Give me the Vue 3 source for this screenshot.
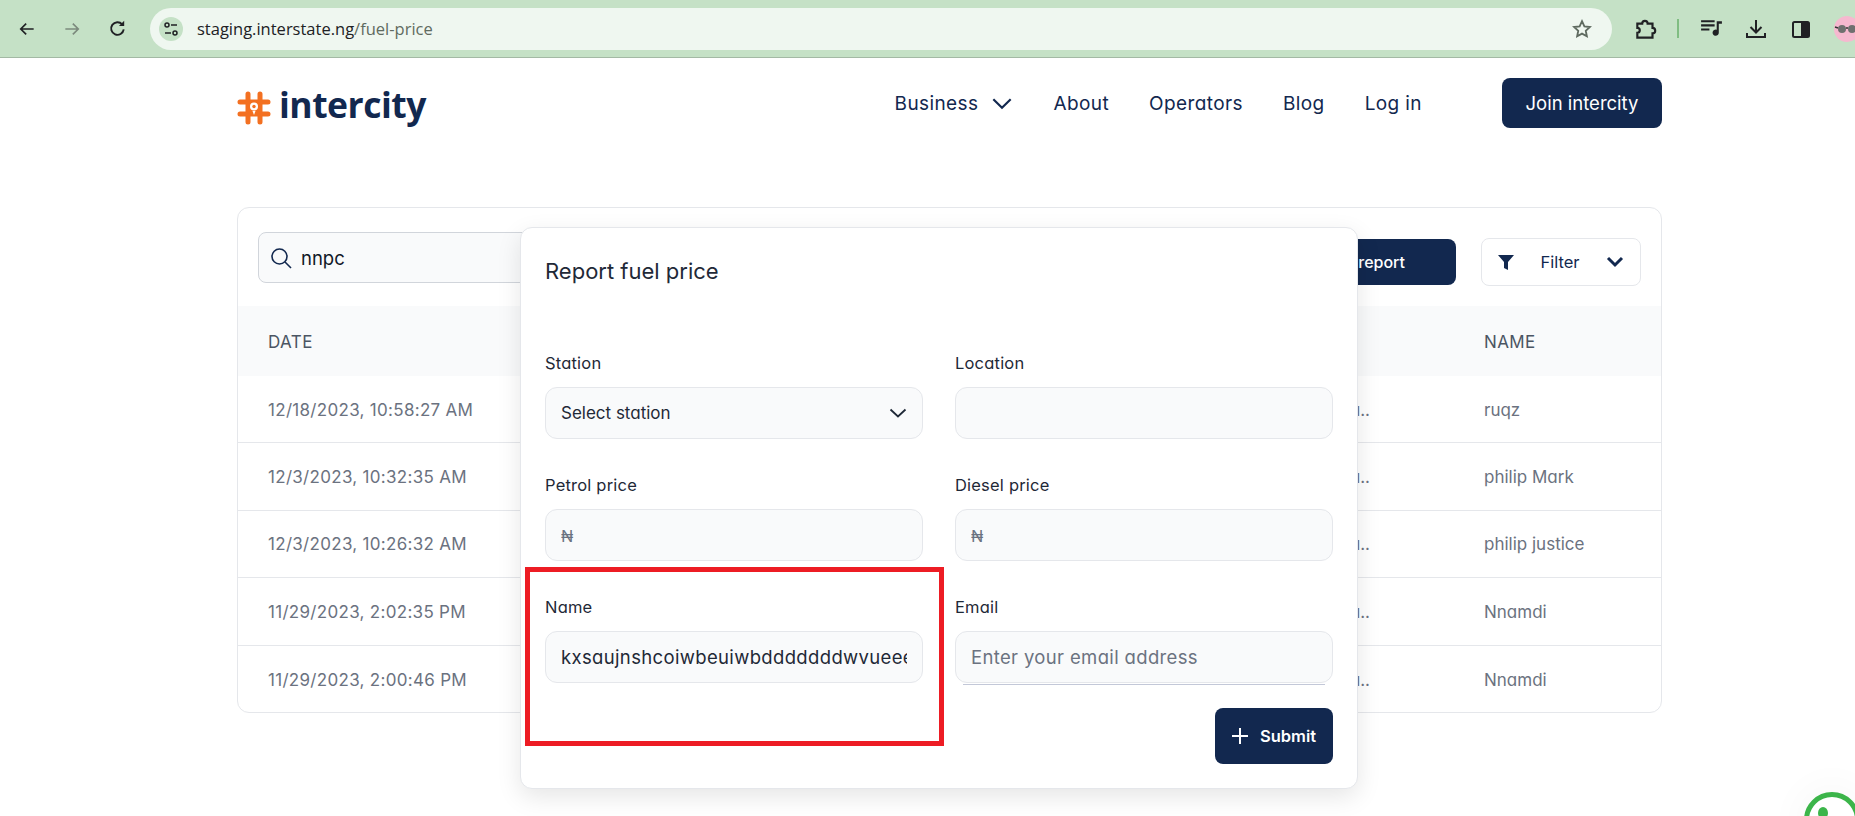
<template>
  <div class="page">
    <!-- browser bar -->
    <div class="chrome">
      <div class="nav-icons">
        <svg class="ic" viewBox="0 0 24 24"><path d="M20 12H5M11 5.500 4.500 12l6.500 6.500" fill="none" stroke="#202124" stroke-width="2"/></svg>
        <svg class="ic" viewBox="0 0 24 24"><path d="M4 12h15M13 5.500l6.500 6.500-6.500 6.500" fill="none" stroke="#7c8a7d" stroke-width="2"/></svg>
        <svg class="ic reload" viewBox="0 0 24 24"><path d="M18.500 13a6.600 6.600 0 1 1-1.600-5.400" fill="none" stroke="#202124" stroke-width="2"/><path d="M19 4v5.500h-5.500z" fill="#202124"/></svg>
      </div>
      <div class="omnibox">
        <span class="tune">
          <svg viewBox="0 0 16 16" width="16" height="16"><circle cx="4" cy="4" r="2" fill="none" stroke="#202124" stroke-width="1.500"/><path d="M8 4h6M2 12h6" stroke="#202124" stroke-width="1.500"/><circle cx="12" cy="12" r="2" fill="none" stroke="#202124" stroke-width="1.500"/></svg>
        </span>
        <span class="url">staging.interstate.ng<span class="url-path">/fuel-price</span></span>
        <svg class="star" viewBox="0 0 24 24"><path d="m12 3.500 2.600 5.600 6 .7-4.500 4.100 1.200 6L12 17l-5.300 2.900 1.200-6-4.500-4.100 6-.7z" fill="none" stroke="#5f6b60" stroke-width="2"/></svg>
      </div>
      <div class="tools">
        <svg class="ic puzzle" viewBox="0 0 24 24"><path d="M4 7h4.500a2.500 2.500 0 0 1 5 0H18v4a2.400 2.400 0 0 1 0 5v4H4v-4.500a2.200 2.200 0 0 0 0-4.500z" fill="none" stroke="#202124" stroke-width="2"/></svg>
        <span class="sep"></span>
        <svg class="ic media" viewBox="0 0 24 24"><path d="M2 5h13M2 9h13M2 13h8" stroke="#202124" stroke-width="2"/><path d="M17 5h5v2.500h-3V16a3 3 0 1 1-2-2.800z" fill="#202124"/></svg>
        <svg class="ic dl" viewBox="0 0 24 24"><path d="M12 3v12M6.500 10l5.500 5.500 5.500-5.500" fill="none" stroke="#202124" stroke-width="2"/><path d="M3 16v4h18v-4" fill="none" stroke="#202124" stroke-width="2"/></svg>
        <svg class="ic side" viewBox="0 0 24 24"><rect x="4" y="5" width="16" height="15" rx="1.500" fill="none" stroke="#202124" stroke-width="2"/><rect x="12" y="5" width="8" height="15" fill="#202124"/></svg>
        <svg class="avatar" viewBox="0 0 26 26"><circle cx="13" cy="13" r="13" fill="#f6b8cf"/><circle cx="8" cy="13" r="4" fill="#6f6f6f"/><circle cx="18" cy="13" r="4" fill="#6f6f6f"/><path d="M1 11l3 1M12 12h2" stroke="#333" stroke-width="1.500"/></svg>
      </div>
    </div>

    <header class="site-header">
      <div class="logo">
        <svg class="logo-mark" viewBox="0 0 34 34">
          <path d="M11 3v28M23 3v28M3 11h28M3 23h28" stroke="#f37021" stroke-width="5" stroke-linecap="round" fill="none"/>
          <rect x="11" y="11" width="12" height="12" fill="#f37021"/>
          <circle cx="17" cy="15.500" r="4" fill="#fff"/>
          <circle cx="17" cy="15.500" r="1.700" fill="#f37021"/>
          <path d="M15.500 20h3l-1.500 4z" fill="#fff"/>
        </svg>
        <span class="logo-text">intercity</span>
      </div>
      <nav class="site-nav">
        <a class="nav-link business">
          Business
          <svg viewBox="0 0 20 12" width="22" height="13"><path d="M2 2l8 8 8-8" fill="none" stroke="#12284f" stroke-width="2"/></svg>
        </a>
        <a class="nav-link">About</a>
        <a class="nav-link">Operators</a>
        <a class="nav-link">Blog</a>
        <a class="nav-link">Log in</a>
      </nav>
      <button class="join">Join intercity</button>
    </header>

    <main class="card">
      <div class="toolbar">
        <div class="search">
          <svg viewBox="0 0 22 22" width="22" height="22"><circle cx="9.500" cy="9.500" r="7.500" fill="none" stroke="#12284f" stroke-width="1.600"/><path d="M15 15l6 6" stroke="#12284f" stroke-width="1.600"/></svg>
          <span>nnpc</span>
        </div>
        <button class="report">Fuel report</button>
        <div class="filter">
          <svg viewBox="0 0 16 16" width="16" height="16"><path d="M0 1h16l-6 7v8l-4-2V8z" fill="#12284f"/></svg>
          <span>Filter</span>
          <svg viewBox="0 0 18 12" width="18" height="12"><path d="M2 2l7 7 7-7" fill="none" stroke="#12284f" stroke-width="3"/></svg>
        </div>
      </div>

      <div class="row head">
        <div>DATE</div>
        <div></div>
        <div>NAME</div>
      </div>
      <div v-for="r in rows" :key="r.date" class="row">
        <div class="date">{{ r.date }}</div>
        <div class="loc">Abu..</div>
        <div>{{ r.name }}</div>
      </div>
    </main>

    <!-- modal sits over the table -->
    <section class="modal">
      <h2 class="modal-title">Report fuel price</h2>
      <div class="form-grid">
        <div class="field">
          <label>Station</label>
          <div class="input select">
            <span>Select station</span>
            <svg viewBox="0 0 18 10" width="18" height="10"><path d="M1.500 1.500 9 8.500l7.500-7" fill="none" stroke="#1f2937" stroke-width="1.800"/></svg>
          </div>
        </div>
        <div class="field">
          <label>Location</label>
          <input class="input" type="text" />
        </div>
        <div class="field">
          <label>Petrol price</label>
          <input class="input price" type="text" placeholder="₦" />
        </div>
        <div class="field">
          <label>Diesel price</label>
          <input class="input price" type="text" placeholder="₦" />
        </div>
        <div class="field">
          <label>Name</label>
          <div class="input boxed">
            <input class="bare" type="text" value="kxsaujnshcoiwbeuiwbdddddddwvueeeeee" />
          </div>
        </div>
        <div class="field email">
          <label>Email</label>
          <input class="input" type="text" placeholder="Enter your email address" />
        </div>
      </div>
      <div class="actions">
        <button class="submit">
          <svg viewBox="0 0 16 16" width="16" height="16"><path d="M8 0v16M0 8h16" stroke="#fff" stroke-width="2"/></svg>
          Submit
        </button>
      </div>
    </section>

    <!-- annotation drawn on the screenshot -->
    <div class="red-box"></div>

    <div class="chat-widget">
      <svg viewBox="0 0 56 56" width="56" height="56"><circle cx="28" cy="28" r="25.500" fill="none" stroke="#3cb54a" stroke-width="5"/><ellipse cx="19" cy="21" rx="5" ry="6" fill="#3cb54a"/></svg>
    </div>
  </div>
</template>

<script setup>
const rows = [
  { date: '12/18/2023, 10:58:27 AM', name: 'ruqz' },
  { date: '12/3/2023, 10:32:35 AM', name: 'philip Mark' },
  { date: '12/3/2023, 10:26:32 AM', name: 'philip justice' },
  { date: '11/29/2023, 2:02:35 PM', name: 'Nnamdi' },
  { date: '11/29/2023, 2:00:46 PM', name: 'Nnamdi' }
]
</script>

<style>
html, body {
  height: 816px;
  overflow: hidden;
  background: #fff;
}
</style>

<style scoped>
.page {
  position: relative;
  height: 816px;
  overflow: hidden;
  font-family: Inter, "Noto Sans", sans-serif;
  font-feature-settings: "cv11";
  color: #12284f;
}

/* browser bar */
.chrome {
  display: flex;
  align-items: center;
  height: 57px;
  background: #c5e1c6;
  border-bottom: 1px solid #a3b9a4;
  padding: 0 0 0 17px;
  box-sizing: content-box;
}
.nav-icons {
  display: flex;
  align-items: center;
  gap: 25px;
  width: 133px;
  flex: none;
}
.ic {
  width: 20px;
  height: 20px;
  flex: none;
}
.reload {
  width: 23px;
  height: 23px;
  margin-left: -1px;
}
.omnibox {
  display: flex;
  align-items: center;
  flex: none;
  width: 1462px;
  height: 42px;
  background: #eff7f0;
  border-radius: 21px;
  padding: 0 19px 0 9px;
  box-sizing: border-box;
}
.tune {
  display: flex;
  align-items: center;
  justify-content: center;
  width: 24px;
  height: 24px;
  border-radius: 50%;
  background: #c5e1c6;
}
.url {
  margin-left: 14px;
  flex: 1;
  font-family: "Open Sans", sans-serif;
  font-size: 16.500px;
  color: #202124;
}
.url-path {
  color: #5f6b60;
}
.star {
  width: 22px;
  height: 22px;
}
.tools {
  display: flex;
  align-items: center;
  margin-left: 21px;
}
.puzzle {
  width: 26px;
  height: 26px;
}
.sep {
  width: 2px;
  height: 19px;
  background: #80bd82;
  margin: 0 20px 0 18px;
}
.media {
  width: 25px;
  height: 25px;
  margin-right: 20px;
}
.dl {
  width: 24px;
  height: 24px;
  margin-right: 21px;
}
.side {
  width: 24px;
  height: 24px;
  margin-right: 21px;
}
.avatar {
  width: 26px;
  height: 26px;
  flex: none;
}

/* site header */
.site-header {
  display: flex;
  align-items: center;
  width: 1425px;
  margin-left: 237px;
  padding: 20px 0 0;
  height: 50px;
  box-sizing: content-box;
}
.logo {
  display: flex;
  align-items: center;
  gap: 8px;
}
.logo-mark {
  width: 34px;
  height: 34px;
  margin-top: 9px;
}
.logo-text {
  font-family: "Open Sans", sans-serif;
  font-size: 35.500px;
  font-weight: 700;
  letter-spacing: -0.500px;
  line-height: 44px;
  margin-top: 2px;
}
.site-nav {
  display: flex;
  align-items: center;
  gap: 40px;
  margin-left: auto;
  font-size: 19px;
  letter-spacing: 0.400px;
}
.business {
  display: flex;
  align-items: center;
  gap: 13px;
}
.join {
  margin-left: 80px;
  width: 160px;
  height: 50px;
  border: none;
  border-radius: 8px;
  background: #12284f;
  color: #fff;
  font: inherit;
  font-size: 18.500px;
}

/* table card */
.card {
  width: 1425px;
  height: 506px;
  margin: 79px 0 0 237px;
  border: 1px solid #e5e7eb;
  border-radius: 12px;
  box-sizing: border-box;
  overflow: hidden;
}
.toolbar {
  display: flex;
  align-items: flex-start;
  height: 98px;
  padding: 24px 20px 0;
  box-sizing: border-box;
}
.search {
  display: flex;
  align-items: center;
  gap: 9px;
  width: 500px;
  height: 51px;
  padding-left: 11px;
  box-sizing: border-box;
  background: #f9fafb;
  border: 1px solid #d1d5db;
  border-radius: 8px;
  font-size: 18.500px;
  color: #111827;
}
.report {
  margin: 7px 0 0 auto;
  width: 190px;
  height: 46px;
  padding: 0 51px 0 0;
  border: none;
  border-radius: 8px;
  background: #12284f;
  color: #fff;
  font: inherit;
  font-size: 16px;
  font-weight: 500;
  text-align: right;
}
.filter {
  display: flex;
  align-items: center;
  justify-content: space-between;
  margin: 6px 0 0 25px;
  width: 160px;
  height: 48px;
  padding: 0 16px;
  box-sizing: border-box;
  border: 1px solid #e5e7eb;
  border-radius: 8px;
  font-size: 16.500px;
}
.row {
  display: grid;
  grid-template-columns: 300px 1fr 177px;
  align-items: center;
  height: 67.400px;
  padding: 1px 0 0 30px;
  border-bottom: 1px solid #e5e7eb;
  box-sizing: border-box;
  font-size: 17px;
  color: #6b7280;
}
.row:last-child {
  border-bottom: none;
}
.row.head {
  height: 70px;
  background: #f9fafb;
  border-bottom: none;
  letter-spacing: 0.400px;
  color: #4b5563;
}
.date {
  letter-spacing: 0.300px;
}
.loc {
  text-align: right;
  padding-right: 114px;
}

/* modal */
.modal {
  position: absolute;
  left: 520px;
  top: 227px;
  width: 838px;
  height: 562px;
  padding: 28px 24px 25px;
  box-sizing: border-box;
  background: #fff;
  border: 1px solid #e5e7eb;
  border-radius: 12px;
  box-shadow: 0 8px 24px rgba(0, 0, 0, 0.1);
}
.modal-title {
  margin: 0 0 66px;
  font-size: 22px;
  line-height: 30px;
  font-weight: 400;
  color: #1f2937;
}
.form-grid {
  display: grid;
  grid-template-columns: 378px 378px;
  column-gap: 32px;
  row-gap: 35px;
}
.field {
  position: relative;
}
.field label {
  display: block;
  height: 22px;
  line-height: 22px;
  margin-bottom: 13px;
  font-size: 16.500px;
  letter-spacing: 0.200px;
  color: #1f2937;
}
.input {
  display: block;
  width: 100%;
  height: 52px;
  padding: 0 15px;
  box-sizing: border-box;
  background: #f9fafb;
  border: 1px solid #e5e7eb;
  border-radius: 12px;
  outline: none;
  font: inherit;
  font-size: 18.500px;
  letter-spacing: 0.350px;
  color: #1f2937;
}
.input::placeholder {
  color: #6b7280;
  opacity: 1;
}
.price::placeholder {
  font-size: 16px;
}
.boxed {
  display: flex;
  align-items: center;
}
.bare {
  width: 100%;
  height: 100%;
  padding: 0;
  border: none;
  outline: none;
  background: transparent;
  font: inherit;
  letter-spacing: inherit;
  color: inherit;
}
.select {
  display: flex;
  align-items: center;
  justify-content: space-between;
  font-size: 17px;
  letter-spacing: 0;
}
.email::after {
  content: "";
  position: absolute;
  left: 8px;
  right: 8px;
  bottom: -2px;
  height: 1px;
  background: #c3c8d8;
}
.actions {
  display: flex;
  justify-content: flex-end;
  margin-top: 25px;
}
.submit {
  display: flex;
  align-items: center;
  justify-content: center;
  gap: 12px;
  width: 118px;
  height: 56px;
  border: none;
  border-radius: 8px;
  background: #12284f;
  color: #fff;
  font: inherit;
  font-size: 16.500px;
  font-weight: 600;
}

.red-box {
  position: absolute;
  left: 525px;
  top: 567px;
  width: 419px;
  height: 179px;
  box-sizing: border-box;
  border: 5px solid #ed1c24;
}

.chat-widget {
  position: absolute;
  left: 1804px;
  top: 792px;
  width: 56px;
  height: 56px;
  border-radius: 50%;
  background: #fff;
  box-shadow: 0 0 30px 14px rgba(0, 0, 0, 0.02);
}
</style>
